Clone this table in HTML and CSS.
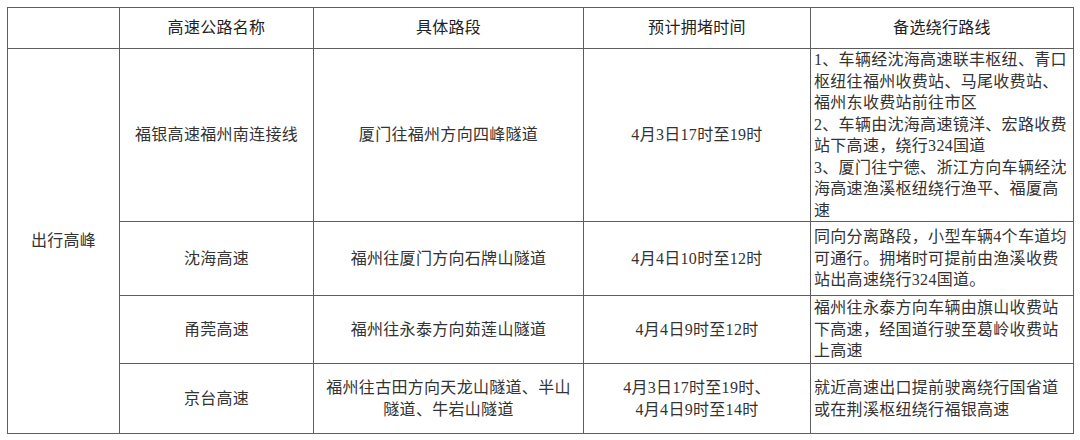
FILE: index.html
```html
<!DOCTYPE html>
<html lang="zh-CN">
<head>
<meta charset="utf-8">
<link rel="stylesheet" href="styles.css">
</head>
<body>
<table class="jam">
  <colgroup>
    <col class="c1"><col class="c2"><col class="c3"><col class="c4"><col class="c5">
  </colgroup>
  <thead>
    <tr class="r-head">
      <th></th>
      <th>高速公路名称</th>
      <th>具体路段</th>
      <th>预计拥堵时间</th>
      <th>备选绕行路线</th>
    </tr>
  </thead>
  <tbody>
    <tr class="r1">
      <td rowspan="4" class="group">出行高峰</td>
      <td>福银高速福州南连接线</td>
      <td>厦门往福州方向四峰隧道</td>
      <td>4月3日17时至19时</td>
      <td class="alt">1、车辆经沈海高速联丰枢纽、青口<br>枢纽往福州收费站、马尾收费站、<br>福州东收费站前往市区<br>2、车辆由沈海高速镜洋、宏路收费<br>站下高速，绕行324国道<br>3、厦门往宁德、浙江方向车辆经沈<br>海高速渔溪枢纽绕行渔平、福厦高<br>速</td>
    </tr>
    <tr class="r2">
      <td>沈海高速</td>
      <td>福州往厦门方向石牌山隧道</td>
      <td>4月4日10时至12时</td>
      <td class="alt">同向分离路段，小型车辆4个车道均<br>可通行。拥堵时可提前由渔溪收费<br>站出高速绕行324国道。</td>
    </tr>
    <tr class="r3">
      <td>甬莞高速</td>
      <td>福州往永泰方向茹莲山隧道</td>
      <td>4月4日9时至12时</td>
      <td class="alt">福州往永泰方向车辆由旗山收费站<br>下高速，经国道行驶至葛岭收费站<br>上高速</td>
    </tr>
    <tr class="r4">
      <td>京台高速</td>
      <td>福州往古田方向天龙山隧道、半山<br>隧道、牛岩山隧道</td>
      <td>4月3日17时至19时、<br>4月4日9时至14时</td>
      <td class="alt">就近高速出口提前驶离绕行国省道<br>或在荆溪枢纽绕行福银高速</td>
    </tr>
  </tbody>
</table>
</body>
</html>
```

FILE: styles.css
```css
html, body {
  margin: 0;
  padding: 0;
  background: #ffffff;
}

body {
  font-family: "Liberation Serif", "Noto Sans CJK SC", serif;
  font-size: 16px;
  color: #333333;
}

.jam {
  margin: 7px 0 0 7px;
  width: 1066px;
  border-collapse: collapse;
  table-layout: fixed;
}

.c1 { width: 112px; }
.c2 { width: 194px; }
.c3 { width: 270px; }
.c4 { width: 227px; }
.c5 { width: 263px; }

.jam th,
.jam td {
  border: 1px solid #5e5e5e;
  padding: 0 2px;
  text-align: center;
  vertical-align: middle;
  line-height: 21.5px;
  letter-spacing: 0.3px;
  font-weight: normal;
  white-space: nowrap;
}

.jam th {
  color: #222222;
}

.jam td.alt {
  text-align: left;
  padding-left: 3px;
}

.r-head { height: 41px; }
.r1 { height: 172px; }
.r2 { height: 74px; }
.r3 { height: 68px; }
.r4 { height: 70px; }

.group {
  padding-bottom: 2px;
}
```
